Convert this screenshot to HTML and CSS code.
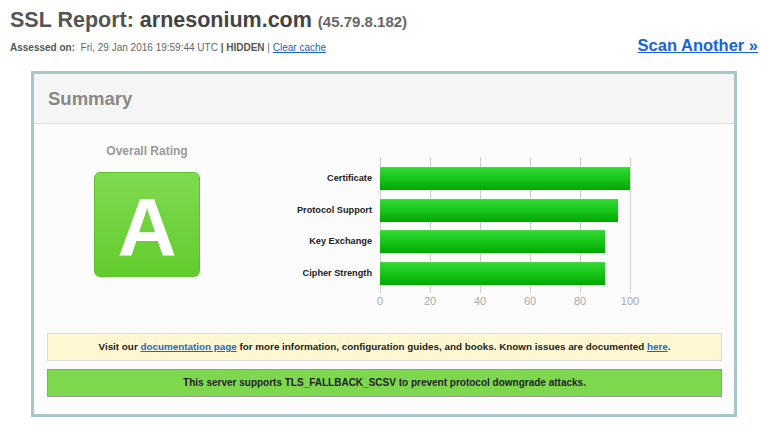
FILE: index.html
```html
<!DOCTYPE html>
<html>
<head>
<meta charset="utf-8">
<link rel="stylesheet" href="styles.css">
</head>
<body>
<div class="page">
  <div class="top">
    <div class="title">
      <h1><span class="lbl">SSL Report:</span> <span class="host">arnesonium.com</span> <span class="ip">(45.79.8.182)</span></h1>
      <div class="assessed"><b>Assessed on:</b>&nbsp; Fri, 29 Jan 2016 19:59:44 UTC <b>| HIDDEN</b> | <a href="#">Clear cache</a></div>
    </div>
    <a class="scan" href="#">Scan Another &raquo;</a>
  </div>

  <div class="summary">
    <div class="summary-head">Summary</div>
    <div class="summary-body">
      <div class="main">
        <div class="rating">
          <div class="rating-title">Overall Rating</div>
          <div class="grade">A</div>
        </div>
        <div class="chart">
          <div class="chart-row">
            <div class="labels">
              <div class="label">Certificate</div>
              <div class="label">Protocol Support</div>
              <div class="label">Key Exchange</div>
              <div class="label">Cipher Strength</div>
            </div>
            <div class="plot">
              <div class="bar" style="width:250px"></div>
              <div class="bar" style="width:237.5px"></div>
              <div class="bar" style="width:225px"></div>
              <div class="bar" style="width:225px"></div>
            </div>
          </div>
          <div class="axis">
            <span>0</span><span>20</span><span>40</span><span>60</span><span>80</span><span>100</span>
          </div>
        </div>
      </div>
      <div class="notice yellow">Visit our <a href="#">documentation page</a> for more information, configuration guides, and books. Known issues are documented <a href="#">here</a>.</div>
      <div class="notice green">This server supports TLS_FALLBACK_SCSV to prevent protocol downgrade attacks.</div>
    </div>
  </div>
</div>
</body>
</html>
```

FILE: styles.css
```css
html, body {
  margin: 0;
  padding: 0;
  background: #fff;
}
body {
  font-family: "Liberation Sans", Arial, sans-serif;
  color: #222;
}
.page {
  padding: 8px 10px 0 10px;
}
.top {
  display: flex;
  justify-content: space-between;
  align-items: flex-start;
}
h1 {
  margin: 0;
  font-size: 21.5px;
  line-height: 24px;
  font-weight: bold;
  color: #555;
}
h1 .host {
  color: #444;
}
h1 .ip {
  font-size: 15px;
  color: #666;
}
.assessed {
  margin-top: 8px;
  font-size: 10px;
  line-height: 12px;
  color: #666;
}
.assessed b {
  color: #555;
}
.assessed a {
  color: #1a66cc;
}
.scan {
  margin-top: 28px;
  font-size: 16.5px;
  font-weight: bold;
  color: #1565d8;
  text-decoration: underline;
}
.summary {
  margin: 16px 0 0 21px;
  width: 700px;
  border: 3px solid #a9c7c8;
  background: #fcfcfc;
}
.summary-head {
  height: 49px;
  line-height: 50px;
  padding-left: 14px;
  background: #f5f5f5;
  border-bottom: 1px solid #d9e3e3;
  font-size: 18.5px;
  font-weight: bold;
  color: #888;
}
.summary-body {
  padding-bottom: 17px;
}
.main {
  display: flex;
}
.rating {
  width: 226px;
  display: flex;
  flex-direction: column;
  align-items: center;
  padding-top: 19px;
}
.rating-title {
  font-size: 12px;
  line-height: 16px;
  font-weight: bold;
  color: #999;
  margin-bottom: 13px;
}
.grade {
  width: 104px;
  height: 103px;
  border: 1px solid #5cc22c;
  border-radius: 6px;
  background: linear-gradient(#7fda50, #62cc2d);
  color: #fff;
  font-size: 82px;
  font-weight: bold;
  line-height: 107px;
  text-align: center;
}
.chart {
  padding-top: 33px;
}
.chart-row {
  display: flex;
  gap: 8px;
}
.labels, .plot {
  display: flex;
  flex-direction: column;
  gap: 8.5px;
  padding: 10px 0 8.5px 0;
}
.labels {
  width: 112px;
}
.label {
  height: 23px;
  line-height: 23px;
  text-align: right;
  font-size: 9.2px;
  font-weight: bold;
  color: #222;
}
.plot {
  width: 251px;
  background: repeating-linear-gradient(to right, #cfcfcf 0, #cfcfcf 1px, transparent 1px, transparent 50px);
}
.bar {
  height: 23px;
  box-sizing: border-box;
  border-top: 1px solid #45dd45;
  background: linear-gradient(#2fd82f, #18c418 50%, #00a800);
}
.axis {
  display: flex;
  margin-left: 95px;
  margin-top: 1px;
}
.axis span {
  width: 50px;
  text-align: center;
  font-size: 11px;
  line-height: 14px;
  color: #aaa;
}
.notice {
  margin: 0 12px 0 13px;
  height: 26px;
  line-height: 26px;
  text-align: center;
  font-size: 10px;
  font-weight: bold;
  color: #222;
}
.notice a {
  color: #1a66cc;
}
.yellow {
  margin-top: 25px;
  font-size: 9.85px;
  background: #fff8d3;
  border: 1px solid #dcdcdc;
}
.green {
  margin-top: 8px;
  background: #7ed84e;
  border: 1px solid #9a9a9a;
}
```
